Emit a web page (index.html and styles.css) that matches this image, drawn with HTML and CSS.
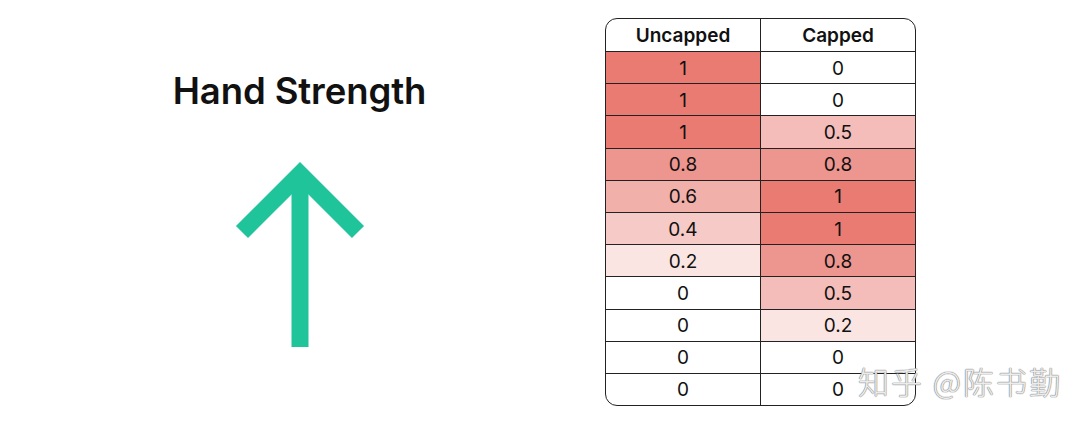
FILE: index.html
```html
<!DOCTYPE html>
<html>
<head>
<meta charset="utf-8">
<link rel="stylesheet" href="styles.css">
</head>
<body>
<div class="page">
  <div class="left">
    <h1 class="title">Hand Strength</h1>
    <svg class="arrow" width="130" height="188" viewBox="0 0 130 188">
      <path d="M65 188 V24" stroke="#1fc49b" stroke-width="17" fill="none"/>
      <path d="M7 73 L65 15 L123 73" stroke="#1fc49b" stroke-width="17" fill="none" stroke-linejoin="miter"/>
    </svg>
  </div>
  <div class="table">
    <div class="row head"><div class="cell">Uncapped</div><div class="cell">Capped</div></div>
    <div class="row"><div class="cell" style="background:rgba(233,123,115,1)">1</div><div class="cell">0</div></div>
    <div class="row"><div class="cell" style="background:rgba(233,123,115,1)">1</div><div class="cell">0</div></div>
    <div class="row"><div class="cell" style="background:rgba(233,123,115,1)">1</div><div class="cell" style="background:rgba(233,123,115,0.5)">0.5</div></div>
    <div class="row"><div class="cell" style="background:rgba(233,123,115,0.8)">0.8</div><div class="cell" style="background:rgba(233,123,115,0.8)">0.8</div></div>
    <div class="row"><div class="cell" style="background:rgba(233,123,115,0.6)">0.6</div><div class="cell" style="background:rgba(233,123,115,1)">1</div></div>
    <div class="row"><div class="cell" style="background:rgba(233,123,115,0.4)">0.4</div><div class="cell" style="background:rgba(233,123,115,1)">1</div></div>
    <div class="row"><div class="cell" style="background:rgba(233,123,115,0.2)">0.2</div><div class="cell" style="background:rgba(233,123,115,0.8)">0.8</div></div>
    <div class="row"><div class="cell">0</div><div class="cell" style="background:rgba(233,123,115,0.5)">0.5</div></div>
    <div class="row"><div class="cell">0</div><div class="cell" style="background:rgba(233,123,115,0.2)">0.2</div></div>
    <div class="row"><div class="cell">0</div><div class="cell">0</div></div>
    <div class="row"><div class="cell">0</div><div class="cell">0</div></div>
  </div>
</div>
<div class="watermark">知乎 @陈书勤</div>
</body>
</html>
```
FILE: styles.css
```css
html, body {
  margin: 0;
  padding: 0;
  background: #fff;
}
body {
  width: 1089px;
  height: 424px;
  position: relative;
  overflow: hidden;
  font-family: Inter, "Noto Sans", sans-serif;
  color: #111;
}
.page {
  display: flex;
  padding-top: 18px;
}
.left {
  width: 605px;
  display: flex;
  flex-direction: column;
  align-items: center;
  padding-top: 51px;
  box-sizing: border-box;
  padding-right: 6px;
}
.title {
  margin: 0;
  font-size: 36.5px;
  font-weight: 600;
  line-height: 44px;
  letter-spacing: -0.1px;
  color: #111;
}
.arrow {
  display: block;
  margin-top: 46px;
}
.table {
  width: 311px;
  border: 1.5px solid #222;
  border-radius: 12px;
  overflow: hidden;
  box-sizing: border-box;
}
.row {
  display: grid;
  grid-template-columns: 155px 1fr;
  height: 32.2px;
  border-top: 1.3px solid #222;
  box-sizing: border-box;
}
.row.head {
  border-top: none;
  height: 32px;
  font-weight: 600;
}
.cell {
  display: flex;
  align-items: center;
  justify-content: center;
  font-size: 19px;
  padding-top: 1px;
}
.cell:first-child {
  border-right: 1.3px solid #222;
}
.watermark {
  position: absolute;
  left: 858px;
  top: 358px;
  font-family: "Noto Sans CJK SC", sans-serif;
  font-size: 31px;
  font-weight: 300;
  color: rgba(255, 255, 255, 0.85);
  text-shadow: 0 0 1px #888, 0 0 1px #888, 0 0 1px #888;
  letter-spacing: 2px;
}
```
